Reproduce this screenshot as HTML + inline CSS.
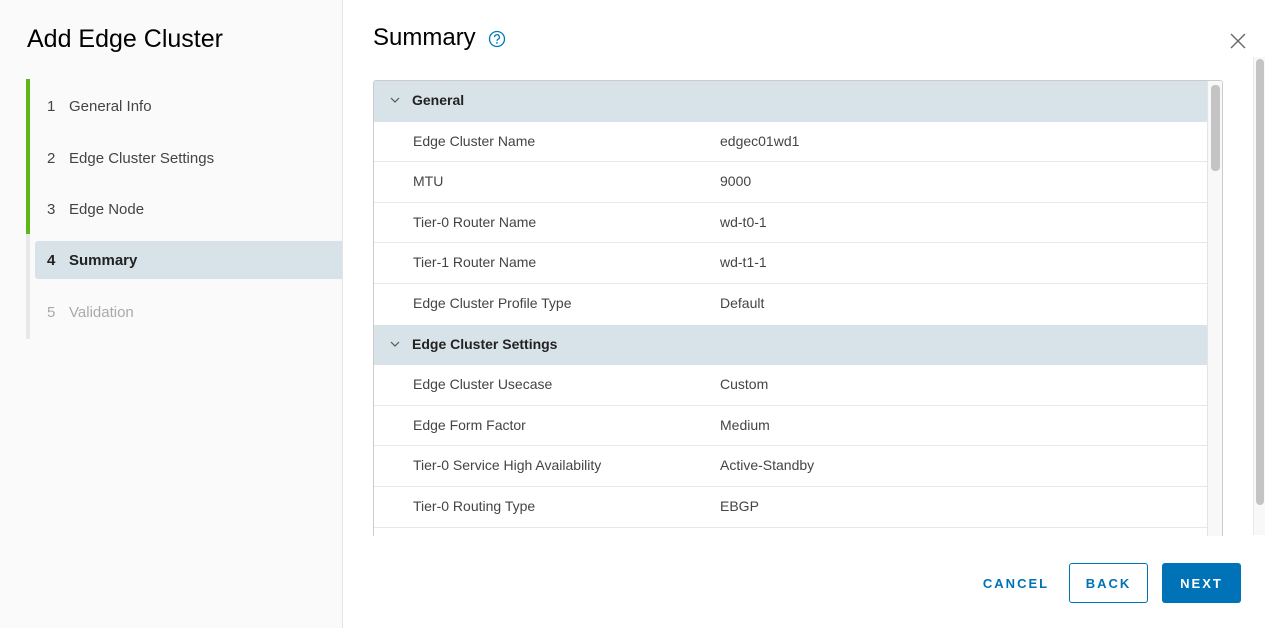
<!DOCTYPE html>
<html><head><meta charset="utf-8"><style>
*{box-sizing:border-box;margin:0;padding:0}
body{width:1265px;height:628px;overflow:hidden;font-family:"Liberation Sans",sans-serif;background:#fff;position:relative;color:#333}
.left{position:absolute;left:0;top:0;width:343px;height:628px;background:#fafafa;border-right:1px solid #e4e4e4}
.left h1{position:absolute;left:27px;top:25px;font-size:25px;font-weight:400;color:#000}
.bar{position:absolute;left:26px;width:4px}
.step{position:absolute;left:35px;width:307px;height:38px;line-height:38px;font-size:15px;color:#444;padding-left:12px}
.step b{font-weight:400;display:inline-block;width:22px}
.step.act{background:#d8e3e9;font-weight:700;color:#222;border-radius:3px 0 0 3px}
.step.act b{font-weight:700}
.step.dis{color:#aaa}
h2{position:absolute;left:373px;top:24px;font-size:24px;font-weight:400;color:#000}
.help{position:absolute;left:488px;top:30px}
.close{position:absolute;left:1230px;top:33px}
.tbl{position:absolute;left:373px;top:80px;width:850px;height:456px;border:1px solid #ccc;border-bottom:none;border-radius:3px 3px 0 0;overflow:hidden}
.row{height:40.6px;line-height:39px;border-bottom:1px solid #e8e8e8;font-size:14px;color:#444;position:relative;width:833px}
.row span{position:absolute;left:39px}
.row i{position:absolute;left:346px;font-style:normal}
.hd{background:#d8e3e9;border-bottom:none;font-weight:700;color:#222}
.hd span{left:38px}
.hd svg{position:absolute;left:16px;top:16px}
.isb{position:absolute;right:0;top:0;width:15px;height:456px;background:#f8f8f8;border-left:1px solid #e4e4e4}
.isb div{position:absolute;left:3px;top:4px;width:9px;height:86px;background:#c4c4c4;border-radius:4px}
.osb{position:absolute;left:1253px;top:57px;width:12px;height:478px;background:#f8f8f8;border-left:1px solid #e8e8e8}
.osb div{position:absolute;left:2px;top:2px;width:8px;height:446px;background:#c4c4c4;border-radius:4px}
.btn{position:absolute;top:563px;height:40px;line-height:41px;font-size:13px;font-weight:700;letter-spacing:2px;text-align:center;border-radius:3px;color:#0072b7}
</style></head><body>
<div class="left">
<h1>Add Edge Cluster</h1>
<div class="bar" style="top:79px;height:155px;background:#5eb715"></div>
<div class="bar" style="top:234px;height:105px;background:#e8e8e8"></div>
<div class="step" style="top:88px"><b>1</b>General Info</div>
<div class="step" style="top:140px"><b>2</b>Edge Cluster Settings</div>
<div class="step" style="top:191px"><b>3</b>Edge Node</div>
<div class="step act" style="top:241px;line-height:40px"><b>4</b>Summary</div>
<div class="step dis" style="top:294px"><b>5</b>Validation</div>
</div>
<h2>Summary</h2>
<svg class="help" width="18" height="18" viewBox="0 0 18 18"><circle cx="9" cy="9" r="7.5" fill="none" stroke="#0079b8" stroke-width="1.3"/><path d="M6.6 7.2a2.4 2.4 0 1 1 3.4 2.1c-.7.4-1 .8-1 1.6" fill="none" stroke="#0079b8" stroke-width="1.3"/><circle cx="9" cy="12.9" r=".9" fill="#0079b8"/></svg>
<svg class="close" width="16" height="16" viewBox="0 0 16 16"><path d="M1 1L15 15M15 1L1 15" stroke="#666" stroke-width="1.4"/></svg>
<div class="tbl">
<div class="row hd"><svg width="10" height="7" viewBox="0 0 10 7"><path d="M1 1l4 4 4-4" fill="none" stroke="#555" stroke-width="1.2"/></svg><span>General</span></div>
<div class="row"><span>Edge Cluster Name</span><i>edgec01wd1</i></div>
<div class="row"><span>MTU</span><i>9000</i></div>
<div class="row"><span>Tier-0 Router Name</span><i>wd-t0-1</i></div>
<div class="row"><span>Tier-1 Router Name</span><i>wd-t1-1</i></div>
<div class="row" style="border-bottom:none"><span>Edge Cluster Profile Type</span><i>Default</i></div>
<div class="row hd"><svg width="10" height="7" viewBox="0 0 10 7"><path d="M1 1l4 4 4-4" fill="none" stroke="#555" stroke-width="1.2"/></svg><span>Edge Cluster Settings</span></div>
<div class="row"><span>Edge Cluster Usecase</span><i>Custom</i></div>
<div class="row"><span>Edge Form Factor</span><i>Medium</i></div>
<div class="row"><span>Tier-0 Service High Availability</span><i>Active-Standby</i></div>
<div class="row"><span>Tier-0 Routing Type</span><i>EBGP</i></div>
<div class="row"><span></span><i></i></div>
<div class="isb"><div></div></div>
</div>
<div class="osb"><div></div></div>
<div class="btn" style="left:978px;width:76px">CANCEL</div>
<div class="btn" style="left:1069px;width:79px;border:1px solid #0072b7;line-height:39px">BACK</div>
<div class="btn" style="left:1162px;width:79px;background:#0072b7;color:#fff">NEXT</div>
</body></html>
